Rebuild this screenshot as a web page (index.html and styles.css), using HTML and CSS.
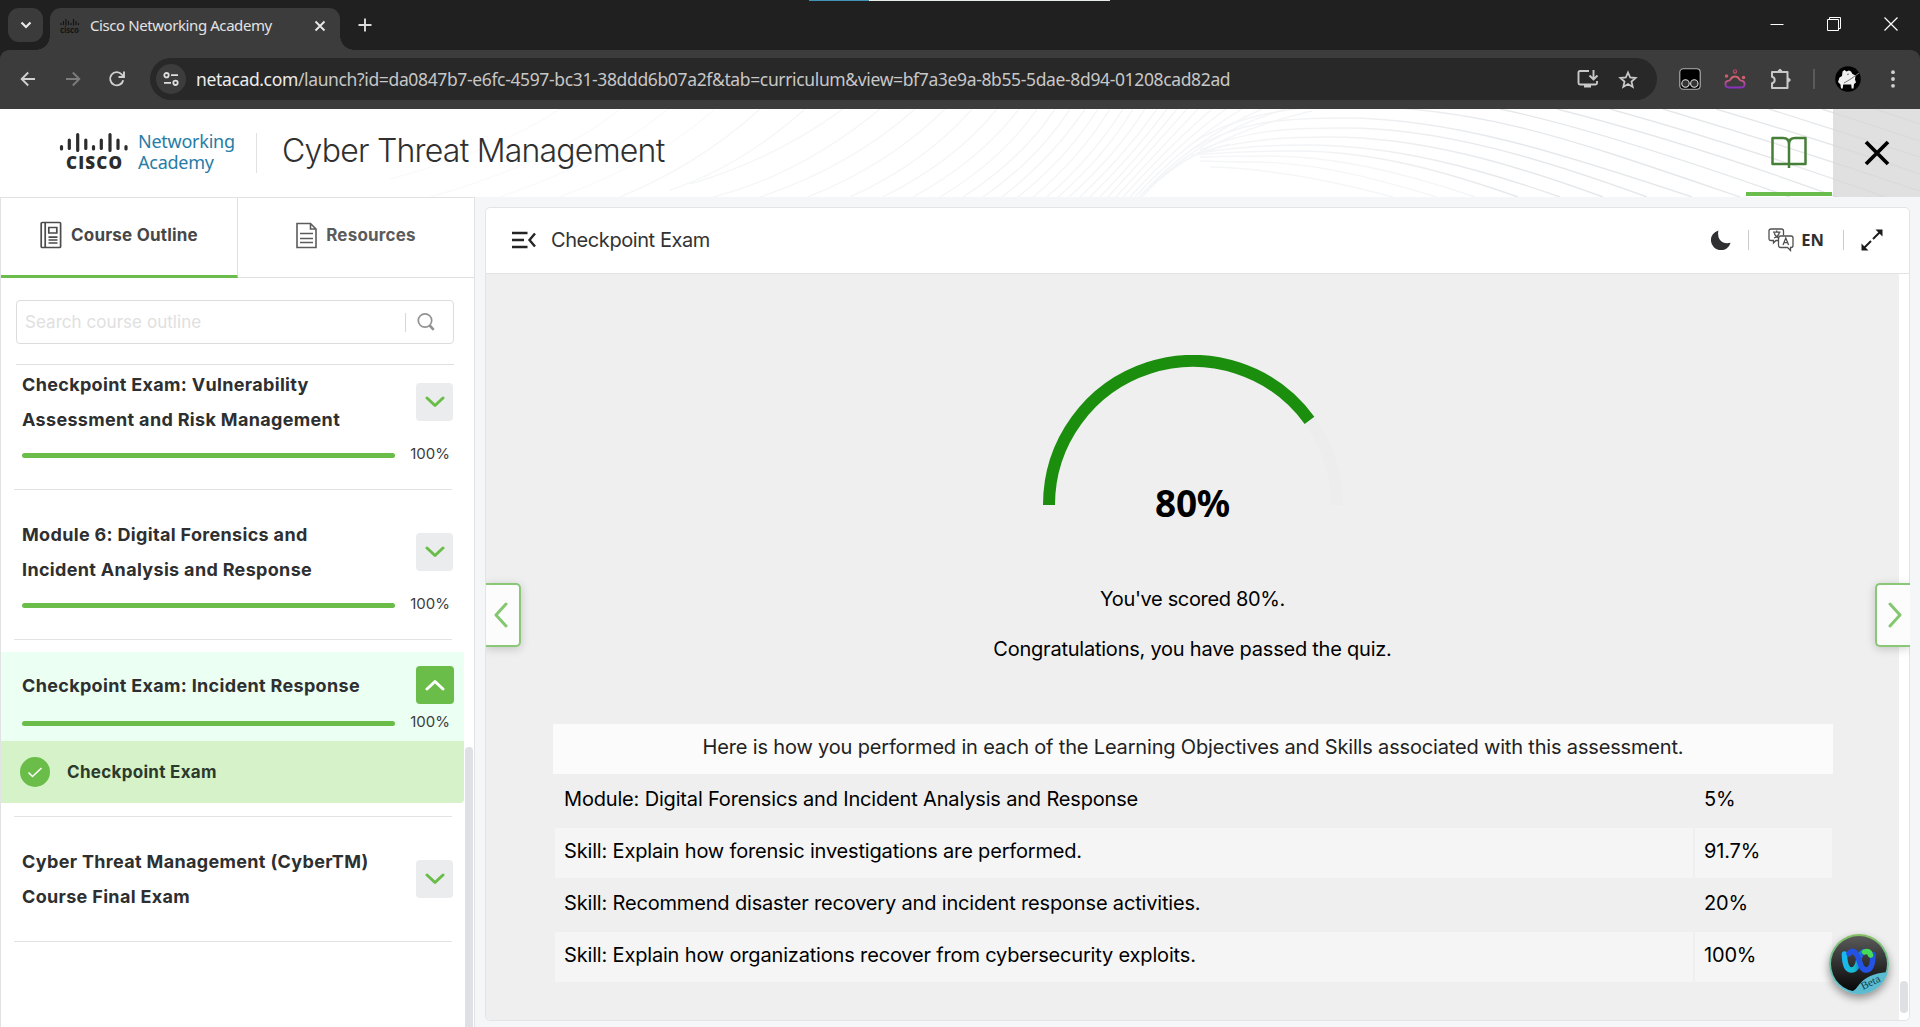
FILE: index.html
```html
<!DOCTYPE html>
<html lang="en">
<head>
<meta charset="utf-8">
<title>Cisco Networking Academy</title>
<link rel="stylesheet" href="styles.css">
</head>
<body>
<div class="tabstrip">
  <div class="load-line"><i></i></div>
  <div class="tab-search"><svg width="12" height="8" viewBox="0 0 12 8"><path d="M1.5 1.5 6 6l4.500-4.500" fill="none" stroke="#e8e8e8" stroke-width="2.200"/></svg></div>
  <div class="tab">
    <svg class="favicon" width="20" height="16" viewBox="0 0 20 16"><path d="M1 5v2M3.500 3v4M6 1v6.500M8.500 3v4M11 5v2M13.500 1v6.500M16 3v4M18.500 5v2" stroke="#151515" stroke-width="1.200"/><text x="0" y="14.500" class="fav-text" textLength="19">cisco</text></svg>
    <span class="tab-title">Cisco Networking Academy</span>
    <svg width="12" height="12" viewBox="0 0 12 12"><path d="M1.500 1.500l9 9M10.500 1.500l-9 9" stroke="#e8e8e8" stroke-width="1.900"/></svg>
  </div>
  <svg class="new-tab" width="14" height="14" viewBox="0 0 14 14"><path d="M7 .5v13M.5 7h13" stroke="#dcdcdc" stroke-width="1.900"/></svg>
  <div class="win-controls">
    <svg width="14" height="14" viewBox="0 0 14 14"><path d="M.5 7.500h13" stroke="#fff"/></svg>
    <svg width="14" height="14" viewBox="0 0 14 14" fill="none" stroke="#fff"><path d="M.5 2.500h11v11H.5zM2.500 2V.5h11v11H12"/></svg>
    <svg width="14" height="14" viewBox="0 0 14 14"><path d="M.5.5l13 13M13.500.5l-13 13" stroke="#fff" stroke-width="1.200"/></svg>
  </div>
</div>
<div class="toolbar-back"><div class="toolbar">
  <svg class="nav-back" width="16" height="16" viewBox="0 0 16 16" fill="none" stroke="#d0d0d0" stroke-width="1.900"><path d="M15 8H2M8.200 1.500 1.700 8l6.500 6.500"/></svg>
  <svg class="nav-fwd" width="16" height="16" viewBox="0 0 16 16" fill="none" stroke="#7c7c7c" stroke-width="1.900"><path d="M1 8h13M7.800 1.500 14.300 8l-6.500 6.500"/></svg>
  <svg class="nav-reload" width="18" height="18" viewBox="0 0 18 18" fill="none" stroke="#d0d0d0" stroke-width="1.900"><path d="M15.200 10.200A6.600 6.600 0 1 1 13.800 4.500L16 7M16 1.500V7h-5.500"/></svg>
  <div class="omnibox">
    <span class="site-info"><svg width="16" height="14" viewBox="0 0 16 14" fill="none" stroke="#dedede" stroke-width="1.800"><circle cx="3.500" cy="3.200" r="2.200"/><circle cx="12.500" cy="10.800" r="2.200"/><path d="M8 3.200h7M1 10.800h7"/></svg></span>
    <span class="url"><b>netacad.com</b>/launch?id=da0847b7-e6fc-4597-bc31-38ddd6b07a2f&amp;tab=curriculum&amp;view=bf7a3e9a-8b55-5dae-8d94-01208cad82ad</span>
    <svg class="install" width="22" height="20" viewBox="0 0 22 20" fill="none" stroke="#c9c9c9" stroke-width="1.900"><path d="M12 2H3q-1.500 0-1.500 1.500v10.500Q1.500 15.500 3 15.500h15.500q1.500 0 1.500-1.500v-2M16.500 1v9M12.500 6.500l4 4 4-4M7 17.500h7"/></svg>
    <svg class="star" width="20" height="19" viewBox="0 0 20 19" fill="none" stroke="#c9c9c9" stroke-width="1.800"><path d="M10 2.500l2.200 5 5.400.5-4.100 3.600 1.200 5.300L10 14.100l-4.700 2.800 1.200-5.300L2.400 8l5.400-.5z"/></svg>
  </div>
  <svg class="ext1" width="22" height="22" viewBox="0 0 22 22"><rect x=".8" y=".8" width="20.400" height="20.400" rx="3.500" fill="#000" stroke="#b5b5b5" stroke-width="1.100"/><g fill="#333" stroke="#ddd" stroke-width="1.100"><circle cx="6.500" cy="15.500" r="3.700"/><circle cx="15.300" cy="15.500" r="3.700"/></g></svg>
  <svg class="ext2" width="22" height="20" viewBox="0 0 22 20" fill="none" stroke="url(#cloud)" stroke-width="1.800"><defs><linearGradient id="cloud" x1="0" y1="0" x2="0" y2="20" gradientUnits="userSpaceOnUse"><stop stop-color="#a83a62"/><stop offset=".45" stop-color="#d86670"/><stop offset="1" stop-color="#8028c8"/></linearGradient></defs><path d="M4.500 18.500a3.400 3.400 0 0 1-.5-6.700q2 .2 2.800-1.600a4.600 4.600 0 0 1 8.400 0q.8 1.800 2.800 1.600a3.400 3.400 0 0 1-.5 6.700z"/><circle cx="11" cy="2.500" r="1.600" stroke-width="1.400"/><circle cx="2.500" cy="7" r="1" stroke-width="1.500"/><circle cx="19.500" cy="8.500" r="1" stroke-width="1.500"/></svg>
  <svg class="ext3" width="22" height="22" viewBox="0 0 22 22" fill="none" stroke="#c9c9c9" stroke-width="2" stroke-linejoin="round"><path d="M2 4h15.500v16H2v-4.700q2.700-.7 2.700-3.300T2 8.700z"/><path d="M8 3q2-3.500 4 0zM18.500 10q3.500 2 0 4z" fill="#c9c9c9" stroke-width="1"/></svg>
  <i class="tool-sep"></i>
  <svg class="avatar" width="26" height="26" viewBox="0 0 26 26"><circle cx="13" cy="13" r="12.800" fill="#000"/><path d="M7.500 5.500l2-1.500 2 1.500 2.500-1 2 1 1.500 2.500 3 1.500-.5 4 1 3-2 1.500-.5 4.500h-1.800l-.5-4h-8l-.5 4H6l-.5-4L3 16l1.500-4.500L7 10z" fill="#efefef"/><path d="M9 17l6-3.500 9-6.500M12 8.500l2-.5" stroke="#777" fill="none"/></svg>
  <svg class="kebab" width="4" height="18" viewBox="0 0 4 18" fill="#d0d0d0"><circle cx="2" cy="2.200" r="1.900"/><circle cx="2" cy="9" r="1.900"/><circle cx="2" cy="15.800" r="1.900"/></svg>
</div></div>

<header class="site-header">
  <svg class="waves" width="1920" height="88" viewBox="0 0 1920 88" fill="none" stroke-width="1.400">
    <defs><linearGradient id="fade" gradientUnits="userSpaceOnUse" x1="1180" y1="0" x2="1520" y2="0"><stop stop-color="#f6f6f9"/><stop offset=".4" stop-color="#f2f3f5"/><stop offset="1" stop-color="#e5e8eb"/></linearGradient></defs>
    <path stroke="#fafafb" d="M500 88Q610 50 668 0M560 88Q660 50 715 0M430 88Q560 50 620 0M390 70Q500 40 560 0"/>
    <path stroke="#f5f6f7" d="M620 88Q700 55 760 0M670 81Q740 58 805 0M690 75Q775 50 843 0M713 88Q800 66 880 0M760 88Q850 58 915 0M808 88Q890 55 945 0M850 88Q925 54 972 0M883 88Q955 52 997 0M913 88Q980 51 1019 0M940 88Q1003 50 1037 0"/>
    <path stroke="#f4f5f7" d="M963 88Q1022 50 1055 0M983 88Q1038 50 1070 0M1002 88Q1052 49 1085 0M1018 88Q1067 49 1098 0M1033 88Q1080 49 1110 0M1047 88Q1093 48 1123 0M1058 88Q1105 47 1133 0M1069 88Q1115 47 1145 0M1080 88Q1125 46 1157 0M1090 88Q1134 45 1167 0M1100 88Q1142 44 1177 0M1108 88Q1150 42 1187 0M1116 88Q1160 40 1198 0M1123 88Q1168 38 1212 0M1130 88Q1177 36 1226 0M1135 88Q1185 34 1242 0M1139 88Q1190 32 1262 0M1142 88Q1195 28 1285 0M1145 84Q1200 28 1312 2"/>
    <path stroke="url(#fade)" d="M1185 40C1225 8 1290-3 1345-3C1480-3 1570 30 1740 88M1190 42C1240 10 1290 9 1345 9C1450 9 1560 44 1692 88M1200 41C1250 20 1290 19 1345 19C1440 19 1540 49 1647 88M1205 42C1250 30 1285 28 1330 28C1420 28 1510 54 1603 88M1200 44C1240 37 1275 36 1307 36C1395 36 1480 60 1560 88M1190 46Q1240 42 1297 42C1375 42 1450 64 1518 88"/>
    <path stroke="#f5f6f8" d="M1200 48Q1240 47 1270 47C1345 47 1420 69 1475 88M1200 52Q1240 53 1255 53C1320 53 1390 74 1437 88M1210 58Q1290 60 1393 88M1150 78Q1180 46 1230 35"/>
    <path stroke="#e5e8eb" d="M1500 0Q1600 21 1790 88M1557 0Q1690 34 1837 88M1610 0Q1740 36 1885 88M1663 0Q1790 38 1920 82M1716 0Q1830 34 1920 65M1769 0L1920 48M1822 0L1920 32M1875 0L1920 15"/>
  </svg>
  <div class="brand">
    <svg width="72" height="44" viewBox="0 0 72 44"><path d="M3.500 14.500v2.500M11.300 8v8.500M19.700 2.500v16M27.800 8v8.500M35.500 14.500v2.500M43.300 8v8.500M52 2.500v16M60 8v8.500M68 14.500v2.500" fill="none" stroke="#2c2c2c" stroke-width="3.200" stroke-linecap="round"/><text x="8" y="36.500" class="cisco-text" textLength="56">CISCO</text></svg>
    <div class="brand-name">Networking<br>Academy</div>
  </div>
  <h1 class="course-title">Cyber Threat Management</h1>
  <div class="book-tab"><svg width="36" height="34" viewBox="0 0 36 34" fill="none" stroke="#457f38" stroke-width="2.500" stroke-linejoin="round"><path d="M18 32v-3q0-1-2-1H1.500V2H12q6 0 6 6v21M18 29q0-1 2-1h14.500V2H24q-6 0-6 6"/></svg></div>
  <div class="close-course"><svg width="26" height="26" viewBox="0 0 26 26"><path d="M2 2l22 22M24 2 2 24" stroke="#000" stroke-width="3.700"/></svg></div>
</header>

<main class="main">
  <aside class="sidebar">
    <div class="side-tabs">
      <div class="side-tab active"><svg width="22" height="28" viewBox="0 0 22 28" fill="none" stroke="#4c4c4c" stroke-width="1.700"><rect x="1.200" y="1.500" width="19.400" height="25" rx="1"/><path d="M5.200 2v24M8.800 6.500h8v5.500h-8zM8.500 16.200h9M8.500 19h9M8.500 22h9"/></svg>Course Outline</div>
      <div class="side-tab"><svg width="21" height="27" viewBox="0 0 21 27" fill="none" stroke="#5c5c5c" stroke-width="1.600"><path d="M1 1.500h13.500L20 7v18.500H1zM14.500 1.500V7H20M4 11.500h13M4 16.500h13M4 20.500h13"/></svg>Resources</div>
    </div>
    <div class="search"><span>Search course outline</span><i></i><svg width="18" height="20" viewBox="0 0 18 20" fill="none" stroke="#929292" stroke-width="1.700"><circle cx="8" cy="8.500" r="6.700"/><path d="M12.700 13.500l4 4.300" stroke-width="2.600"/></svg></div>
    <div class="outline">
      <section class="item first"><div class="row"><h2>Checkpoint Exam: Vulnerability<br>Assessment and Risk Management</h2><button><svg width="20" height="12" viewBox="0 0 20 12"><path d="M2 2l8 7.500L18 2"/></svg></button></div><div class="progress"><i></i><span>100%</span></div></section>
      <section class="item"><div class="row"><h2>Module 6: Digital Forensics and<br>Incident Analysis and Response</h2><button><svg width="20" height="12" viewBox="0 0 20 12"><path d="M2 2l8 7.500L18 2"/></svg></button></div><div class="progress"><i></i><span>100%</span></div></section>
      <section class="item current"><div class="row"><h2>Checkpoint Exam: Incident Response</h2><button><svg width="20" height="12" viewBox="0 0 20 12"><path d="M2 10l8-7.500L18 10"/></svg></button></div><div class="progress"><i></i><span>100%</span></div></section>
      <div class="lesson"><svg width="30" height="30" viewBox="0 0 30 30"><circle cx="15" cy="15" r="15" fill="#69bd48"/><path d="M8.500 15.500l4 4L21.500 11" fill="none" stroke="#fff" stroke-width="1.600"/></svg>Checkpoint Exam</div>
      <div class="rule"></div>
      <section class="item last"><div class="row"><h2>Cyber Threat Management (CyberTM)<br>Course Final Exam</h2><button><svg width="20" height="12" viewBox="0 0 20 12"><path d="M2 2l8 7.500L18 2"/></svg></button></div></section>
      <div class="side-thumb"></div>
    </div>
  </aside>

  <div class="card">
    <div class="card-head">
      <svg width="24" height="18" viewBox="0 0 24 18" fill="none" stroke="#242424" stroke-width="2.400"><path d="M0 2h15.500M0 9h12M0 16h15.500M23 2.500 17.500 9l5.500 6.500"/></svg>
      <span class="card-title">Checkpoint Exam</span>
      <svg class="moon" width="20" height="20" viewBox="0 0 20 20"><path d="M7.500.500A10 10 0 1 0 19.600 12.800Q12 14.500 8.500 9.200 6.300 5 7.500.500z" fill="#303033"/></svg>
      <i class="sep"></i>
      <svg class="lang" width="26" height="24" viewBox="0 0 26 24" fill="none" stroke="#505050" stroke-width="1.300"><path d="M10.500 12.500H8L5.500 15v-2.500H3q-2 0-2-2V3q0-2 2-2h10.500q2 0 2 2v4.500"/><path d="M12.500 8H23q2 0 2 2v7.500q0 2-2 2h-.5v3l-3-3h-7q-2 0-2-2V10q0-2 2-2z"/><path d="M5 4.200h7.500M8.700 2.500v1.700M6 10q4.500-1.500 5.300-5.500M6.300 5q1.200 4 5 5M15 17l2.800-7 2.800 7M16 14.700h3.700"/></svg>
      <b class="en">EN</b>
      <i class="sep"></i>
      <svg class="expand" width="22" height="22" viewBox="0 0 22 22"><path d="M3 19l7-7M12 10l7-7" stroke="#1c1c1c" stroke-width="1.900"/><path d="M14.500.5h7v7zM7.500 21.500h-7v-7z" fill="#1c1c1c"/></svg>
    </div>
    <div class="stage">
      <div class="result">
        <div class="gauge">
          <svg width="300" height="150" viewBox="0 0 300 150" fill="none" stroke-width="12"><path d="M6 150A144 144 0 0 1 294 150" stroke="#ededed"/><path d="M6 150A144 144 0 0 1 266.500 65.360" stroke="#1b8f0d"/></svg>
          <strong>80%</strong>
        </div>
        <p class="score">You've scored 80%.</p>
        <p class="congrats">Congratulations, you have passed the quiz.</p>
        <div class="table-head">Here is how you performed in each of the Learning Objectives and Skills associated with this assessment.</div>
        <div class="table">
          <div class="tr"><span>Module: Digital Forensics and Incident Analysis and Response</span><span>5%</span></div>
          <div class="tr alt"><span>Skill: Explain how forensic investigations are performed.</span><span>91.7%</span></div>
          <div class="tr"><span>Skill: Recommend disaster recovery and incident response activities.</span><span>20%</span></div>
          <div class="tr alt"><span>Skill: Explain how organizations recover from cybersecurity exploits.</span><span>100%</span></div>
        </div>
      </div>
      <div class="stage-scroll"><i></i></div>
    </div>
    <div class="pager prev"><svg width="14" height="26" viewBox="0 0 14 26"><path d="M12 2 2 13l10 11"/></svg></div>
    <div class="pager next"><svg width="14" height="26" viewBox="0 0 14 26"><path d="M2 2l10 11L2 24"/></svg></div>
  </div>
</main>

<div class="assistant">
  <svg width="60" height="60" viewBox="0 0 60 60">
    <defs>
      <linearGradient id="ring" x1="0" y1="0" x2="0" y2="1"><stop stop-color="#86bf62"/><stop offset="1" stop-color="#5cc0d6"/></linearGradient>
      <linearGradient id="face" x1="0" y1="0" x2="0" y2="1"><stop stop-color="#5a5a5a"/><stop offset="1" stop-color="#050505"/></linearGradient>
      <linearGradient id="wl" x1="0" y1="0" x2="1" y2="0"><stop stop-color="#19b9f0"/><stop offset=".5" stop-color="#18bcc8"/><stop offset="1" stop-color="#2450dc"/></linearGradient>
      <clipPath id="disc"><circle cx="30" cy="30" r="30"/></clipPath>
    </defs>
    <circle cx="30" cy="30" r="30" fill="url(#ring)"/><circle cx="30" cy="30" r="28" fill="url(#face)"/>
    <g fill="none" stroke-width="5.500" stroke-linecap="round"><path d="M15.500 20C15.500 30 18 36 22.500 36C27 36 29 31 30 25Q31.500 19 35 17.500" stroke="url(#wl)"/><path d="M20 19.500C24 14.500 28 19 30 26C32 33 34 36.500 38 36C43 35 44 28 44 20.500" stroke="#2453e4"/><path d="M35.500 18Q40 16 41.500 21" stroke="#45dc58"/></g>
    <g clip-path="url(#disc)"><path d="M20 58Q25 58 29 52 38 39 60 38v22H20z" fill="#5bbcd0"/></g>
    <text x="34" y="56" transform="rotate(-26 34 56)" class="beta">Beta</text>
  </svg>
</div>
</body>
</html>
```
FILE: styles.css
```css
* { box-sizing: border-box; }
body { margin: 0; width: 1920px; height: 1027px; overflow: hidden; display: flex; flex-direction: column; font-family: Inter, "Liberation Sans", sans-serif; color: #2d2d2d; background: #f5f6f8; position: relative; }
svg { display: block; flex: none; }
h1, h2, p { margin: 0; }

/* Browser chrome */
.tabstrip { height: 50px; background: #202020; display: flex; align-items: flex-start; position: relative; flex: none; }
.load-line { position: absolute; left: 809px; top: 0; width: 301px; height: 1px; background: #e6ebe8; }
.load-line i { display: block; width: 60px; height: 1px; background: #3f93b5; }
.tab-search { width: 35px; height: 34px; margin: 8px 0 0 8px; border-radius: 11px; background: #3b3b3b; display: flex; align-items: center; justify-content: center; }
.tab { width: 290px; height: 42px; margin: 8px 0 0 7px; padding: 0 14px 7px 10px; border-radius: 11px 11px 0 0; background: #3c3c3c; display: flex; align-items: center; position: relative; }
.tab::before, .tab::after { content: ""; position: absolute; bottom: 0; width: 14px; height: 14px; }
.tab::before { left: -14px; background: radial-gradient(circle at 0 0, transparent 13.500px, #3c3c3c 14px); }
.tab::after { right: -14px; background: radial-gradient(circle at 100% 0, transparent 13.500px, #3c3c3c 14px); }
.favicon { margin-right: 10px; }
.fav-text { font: 700 8px "Open Sans", sans-serif; fill: #151515; }
.tab-title { flex: 1; padding-bottom: 2px; font: 15px "Noto Sans", sans-serif; letter-spacing: -.42px; color: #e3e3e3; white-space: nowrap; }
.new-tab { margin: 18px 0 0 18px; }
.win-controls { margin: 17px 22px 0 auto; display: flex; gap: 43px; }
.toolbar-back { background: #202020; flex: none; }
.toolbar { height: 59px; padding-bottom: 1px; background: #3c3c3c; border-radius: 9px 9px 0 0; display: flex; align-items: center; }
.nav-back { margin-left: 20px; }
.nav-fwd { margin-left: 29px; }
.nav-reload { margin-left: 27px; }
.omnibox { width: 1507px; height: 42px; margin-left: 24px; border-radius: 21px; background: #282828; display: flex; align-items: center; }
.site-info { width: 30px; height: 30px; margin-left: 6px; border-radius: 50%; background: #3c3c3c; display: flex; align-items: center; justify-content: center; }
.url { margin-left: 10px; flex: 1; font: 17.500px "Noto Sans", sans-serif; letter-spacing: -.36px; color: #c7c7c7; white-space: nowrap; }
.url b { font-weight: 400; color: #ececec; }
.install { margin-right: 19px; }
.star { margin-right: 19px; }
.ext1 { margin-left: 22px; }
.ext2 { margin-left: 23px; }
.ext3 { margin-left: 24px; }
.tool-sep { width: 2px; height: 20px; margin-left: 21px; background: #5a5a5a; }
.avatar { margin-left: 20px; }
.kebab { margin-left: 30px; }

/* Course header */
.site-header { height: 88px; background: #fff; display: flex; position: relative; flex: none; }
.waves { position: absolute; left: 0; top: 0; }
.brand { width: 257px; height: 40px; margin-top: 24px; padding-left: 58px; border-right: 1px solid #e2e2e2; display: flex; gap: 8px; position: relative; }
.brand svg { margin-top: -1px; }
.cisco-text { font: 800 17px "Open Sans", sans-serif; fill: #2c2c2c; }
.brand-name { margin-top: -2px; font: 18px/21px "Noto Sans", sans-serif; letter-spacing: -.25px; color: #277ca6; }
.course-title { margin: 21px 0 0 25px; font-size: 32px; line-height: 42px; font-weight: 300; letter-spacing: -.77px; color: #303030; position: relative; white-space: nowrap; }
.book-tab { width: 86px; height: 87px; margin: 0 1px 0 auto; padding: 27px 0 0 25px; border-bottom: 4px solid #6abd4c; position: relative; }
.close-course { width: 87px; background: rgba(214, 214, 214, .75); display: flex; justify-content: center; padding-top: 31px; position: relative; }

.main { flex: 1; min-height: 0; display: flex; }

/* Sidebar */
.sidebar { width: 475px; background: #fff; border: 1px solid #e1e2e4; border-bottom: 0; display: flex; flex-direction: column; }
.side-tabs { display: flex; height: 80px; flex: none; }
.side-tab { flex: 1; display: flex; align-items: center; justify-content: center; gap: 9px; padding-bottom: 5px; border-bottom: 1px solid #dfe0e2; font-size: 17px; font-weight: 700; letter-spacing: .2px; color: #5b5b5b; }
.side-tab.active { border-right: 1px solid #dfe0e2; border-bottom: 3px solid #6abd4c; color: #474747; padding-bottom: 3px; }
.search { width: 438px; height: 44px; margin: 22px 0 20px 15px; border: 1px solid #dcdcdc; border-radius: 4px; display: flex; align-items: center; font-size: 17px; letter-spacing: .05px; color: #e0e0e0; flex: none; }
.search span { flex: 1; padding-left: 8px; }
.search i { width: 1px; height: 19px; background: #d8d8d8; margin-right: 11px; }
.search svg { margin-right: 18px; }
.outline { flex: 1; min-height: 0; position: relative; }
.outline::before { content: ""; display: block; height: 1px; margin: 0 20px 0 15px; background: #dedfe0; }
.item { height: 150px; padding: 27px 0 0 21px; position: relative; }
.item::after { content: ""; display: block; position: absolute; left: 13px; width: 438px; bottom: 0; height: 1px; background: #e2e3e4; }
.item.first { height: 125px; padding-top: 2px; }
.row { width: 431px; display: flex; justify-content: space-between; align-items: center; }
.row h2 { font-size: 18px; line-height: 35px; font-weight: 700; letter-spacing: .33px; color: #2e2f30; white-space: nowrap; }
.row button { width: 37px; height: 38px; margin: 0; margin-top: -1px; border: 0; border-radius: 4px; background: #ebecee; padding: 0; display: flex; align-items: center; justify-content: center; }
.row path { fill: none; stroke: #69bd48; stroke-width: 3; stroke-linecap: round; stroke-linejoin: round; }
.progress { display: flex; align-items: center; width: 428px; height: 34px; justify-content: space-between; font-size: 15px; color: #3c3c3c; }
.progress i { width: 373px; height: 5px; margin-top: 2px; border-radius: 3px; background: #69bd48; }
.progress span { padding-bottom: 2px; }
.item.current { margin-top: 12px; height: 89px; width: 463px; padding-top: 14px; background: #ebfff3; }
.item.current::after { display: none; }
.current .row { height: 38px; width: 432px; }
.current button { width: 38px; margin-top: 0; background: #69bd48; }
.current .row path { stroke: #fff; }
.current .progress { padding-top: 1px; height: 35px; }
.lesson { height: 62px; width: 463px; padding-left: 19px; display: flex; align-items: center; gap: 17px; background: #d6f2c9; border-bottom-right-radius: 4px; font-size: 17px; font-weight: 700; letter-spacing: .3px; color: #2b3a2c; }
.rule { height: 1px; margin: 13px 0 0 13px; width: 438px; background: #e2e3e4; }
.item.last { height: 125px; }
.side-thumb { position: absolute; left: 464px; top: 383px; width: 8px; height: 290px; border-radius: 4px 4px 0 0; background: #dfe0e6; }

/* Content card */
.card { width: 1425px; height: 814px; margin: 10px 0 0 10px; background: #fff; border: 1px solid #e3e4e6; border-radius: 5px; display: flex; flex-direction: column; position: relative; }
.card-head { height: 66px; padding: 0 26px 2px; display: flex; align-items: center; flex: none; border-bottom: 1px solid #e3e3e3; }
.card-title { margin-left: 15px; flex: 1; font-size: 20px; letter-spacing: -.42px; color: #333; }
.sep { width: 1px; height: 20px; background: #cbcbcb; }
.moon { margin-right: 17px; }
.lang { margin-left: 19px; }
.en { margin: 0 19px 0 7px; font: 700 16.500px "Open Sans", sans-serif; color: #2f2f2f; }
.expand { margin-left: 17px; }
.stage { flex: 1; display: flex; min-height: 0; }
.result { flex: 1; background: #efefef; border-radius: 0 0 0 4px; display: flex; flex-direction: column; font-size: 20px; letter-spacing: -.17px; color: #000; }
.result p { text-align: center; line-height: 30px; margin: 47px 0 0 0; letter-spacing: -.23px; }
.result .score { letter-spacing: -.35px; }
.result .congrats { margin-top: 20px; }
.gauge { align-self: center; margin-top: 81px; width: 300px; height: 182px; display: flex; flex-direction: column; align-items: center; }
.gauge strong { margin-top: -27px; font: 700 37px/50px "Noto Sans", sans-serif; letter-spacing: -.3px; }
.table-head { margin: 60px 66px 2px 67px; height: 50px; background: #fbfbfb; text-align: center; line-height: 46px; color: #222; white-space: nowrap; }
.table { margin: 0 67px 0 69px; display: grid; gap: 2px; }
.tr { display: grid; grid-template-columns: 1fr 137px; gap: 2px; height: 50px; line-height: 46px; }
.tr span { padding-left: 9px; white-space: nowrap; }
.alt span { background: #f5f5f5; }
.stage-scroll { width: 10px; display: flex; align-items: flex-end; justify-content: center; padding-bottom: 7px; }
.stage-scroll i { width: 8px; height: 32px; border-radius: 4px; background: #dfe0e4; }
.pager { position: absolute; top: 375px; width: 35px; height: 64px; background: #fcfcfc; border: 2px solid #8ac777; box-shadow: 0 2px 10px rgba(0, 0, 0, .18); display: flex; align-items: center; justify-content: center; }
.pager path { fill: none; stroke: #84c76f; stroke-width: 3; stroke-linecap: round; stroke-linejoin: round; }
.prev { left: 0; border-left: 0; border-radius: 0 5px 5px 0; clip-path: inset(-15px -15px -15px 0); padding-right: 3px; }
.next { right: -1px; border-right: 0; border-radius: 5px 0 0 5px; clip-path: inset(-15px 0 -15px -15px); padding-left: 2px; }

/* Floating assistant */
.assistant { position: absolute; left: 1829px; top: 934px; width: 60px; height: 60px; border-radius: 50%; box-shadow: 0 4px 9px rgba(0, 0, 0, .4); }
.beta { font: 11px "Liberation Serif", serif; fill: #123c50; }
```
